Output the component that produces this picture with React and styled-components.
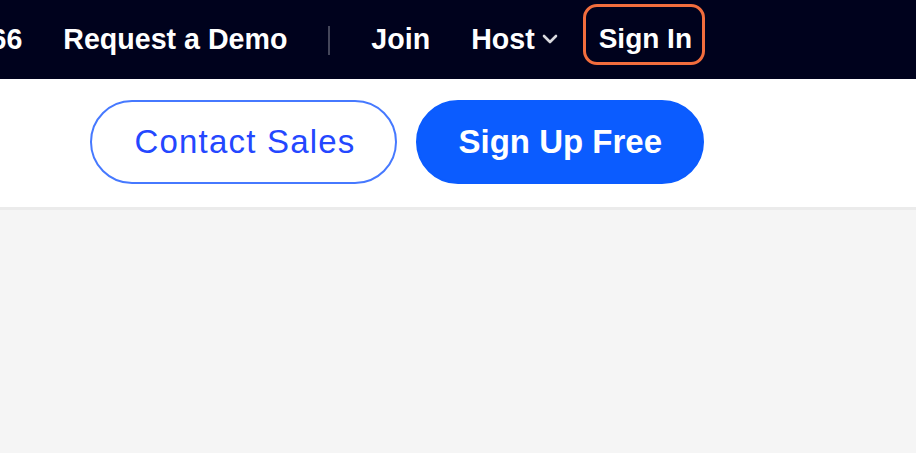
import React from 'react';
import styled, { createGlobalStyle } from 'styled-components';

const GlobalStyle = createGlobalStyle`
  html, body {
    margin: 0;
    padding: 0;
    background: #f5f5f5;
    font-family: 'Liberation Sans', Arial, sans-serif;
  }
  * {
    box-sizing: border-box;
  }
`;

const Page = styled.div`
  width: 100%;
  min-height: 453px;
  background: #f5f5f5;
  overflow: hidden;
`;

const TopBar = styled.nav`
  height: 79px;
  background: #00021d;
  display: flex;
  justify-content: flex-end;
  align-items: center;
  gap: 41px;
  padding: 0 211px 1px 0;
  overflow: hidden;
  white-space: nowrap;
`;

const NavLink = styled.a`
  font-size: 28.6px;
  font-weight: 700;
  color: #ffffff;
  text-decoration: none;
  display: flex;
  align-items: center;
  gap: 7px;
  cursor: pointer;
`;

const Divider = styled.span`
  width: 2px;
  height: 29px;
  margin-top: 2px;
  background: #44465a;
  flex-shrink: 0;
`;

const SignInBox = styled.a`
  align-self: flex-start;
  margin: 4px 0 0 -16px;
  height: 61px;
  padding: 16px 10px 0 13px;
  border: 3px solid #f26d3d;
  border-radius: 14px;
  font-size: 28px;
  font-weight: 700;
  color: #ffffff;
  text-decoration: none;
  cursor: pointer;
`;

const Chevron = () => (
  <svg width="16" height="10" viewBox="0 0 16 10" fill="none">
    <path
      d="M2 2 L8 8 L14 2"
      stroke="#d9d9de"
      strokeWidth="2.6"
      strokeLinecap="round"
      strokeLinejoin="round"
    />
  </svg>
);

const ActionBar = styled.div`
  height: 131px;
  background: #ffffff;
  border-bottom: 3px solid #ebebeb;
  display: flex;
  justify-content: flex-end;
  align-items: flex-start;
  gap: 19px;
  padding: 21px 212px 0 0;
`;

const PillButton = styled.button`
  height: 84px;
  border-radius: 42px;
  font-family: 'Liberation Sans', Arial, sans-serif;
  font-size: 33px;
  cursor: pointer;
  display: flex;
  align-items: center;
  white-space: nowrap;
  border: 2px solid ${(p) => (p.$primary ? '#0b5cff' : '#4679ff')};
  background: ${(p) => (p.$primary ? '#0b5cff' : '#ffffff')};
  color: ${(p) => (p.$primary ? '#ffffff' : '#2447ff')};
  font-weight: ${(p) => (p.$primary ? 700 : 400)};
  letter-spacing: ${(p) => (p.$primary ? '0' : '1.2px')};
  padding: ${(p) => (p.$primary ? '0 40px' : '0 40px 0 42px')};
`;

export default function App() {
  return (
    <>
      <GlobalStyle />
      <Page>
        <TopBar>
          <NavLink>1.888.799.9666</NavLink>
          <NavLink>Request a Demo</NavLink>
          <Divider />
          <NavLink>Join</NavLink>
          <NavLink>
            Host
            <Chevron />
          </NavLink>
          <SignInBox>Sign In</SignInBox>
        </TopBar>
        <ActionBar>
          <PillButton>Contact Sales</PillButton>
          <PillButton $primary>Sign Up Free</PillButton>
        </ActionBar>
      </Page>
    </>
  );
}
